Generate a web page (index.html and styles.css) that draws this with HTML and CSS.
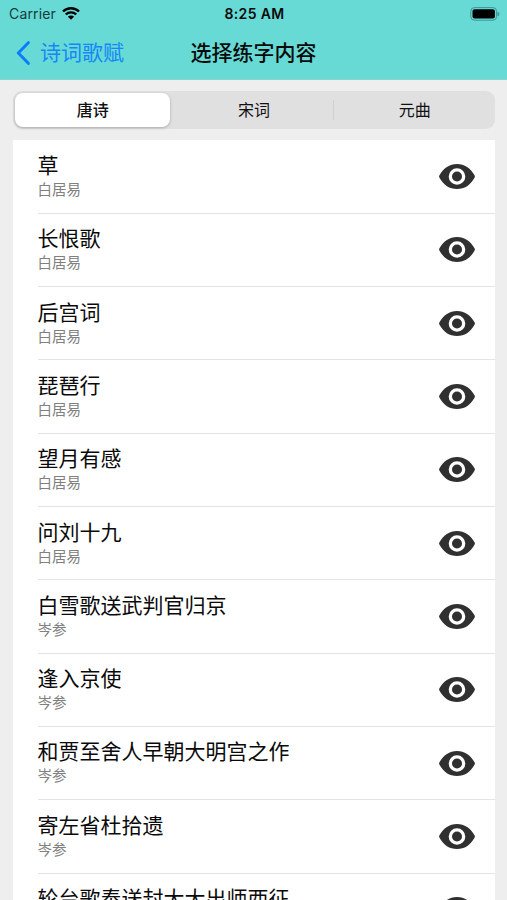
FILE: index.html
```html
<!DOCTYPE html>
<html lang="zh-CN">
  <head>
    <meta charset="UTF-8" />
    <meta name="viewport" content="width=device-width, initial-scale=1.0" />
    <title>选择练字内容</title>
    <link rel="stylesheet" href="styles.css">
  </head>
  <body>
    <header class="topbar">
      <div class="status">
        <div class="carrier">
          <span>Carrier</span>
          <svg class="wifi" viewBox="0 0 18 13">
            <path d="M1 4.5a11.5 11.5 0 0 1 16 0" />
            <path d="M3.8 7.5a7.5 7.5 0 0 1 10.4 0" />
            <path class="dot" d="M9 12.8L5.9 9.7a4.4 4.4 0 0 1 6.2 0z" />
          </svg>
        </div>
        <div class="time">8:25 AM</div>
        <div class="power">
          <svg class="battery" viewBox="0 0 30 14">
            <rect class="shell" x=".8" y=".6" width="25.8" height="12.6" rx="3.6" />
            <rect x="2.5" y="2.3" width="22.4" height="9.2" rx="2" />
            <path class="cap" d="M27.5 4.7c2.6.8 2.6 3.8 0 4.6z" />
          </svg>
        </div>
      </div>
      <nav class="navbar">
        <a class="back" href="#">
          <svg class="chevron" viewBox="0 0 14 24"><path d="M12.3 1.7L2.3 12l10 10.3" /></svg>
          <span>诗词歌赋</span>
        </a>
        <h1>选择练字内容</h1>
      </nav>
    </header>

    <div class="segments">
      <button class="segment active" type="button">唐诗</button>
      <button class="segment" type="button">宋词</button>
      <button class="segment" type="button">元曲</button>
    </div>

    <svg width="0" height="0" class="defs">
      <symbol id="eye" viewBox="0 0 36 25">
        <path fill-rule="evenodd" d="M18 0C25.5 0 31.500 4 35.500 11.300Q36.300 12.500 35.500 13.700C31.500 21 25.500 25 18 25S4.500 21 .5 13.700Q-.3 12.500 .5 11.300C4.500 4 10.500 0 18 0zM18 4.200a8.300 8.300 0 1 0 0 16.600a8.300 8.300 0 1 0 0-16.600z" />
        <circle cx="18" cy="12.5" r="5" />
      </symbol>
    </svg>

    <ul class="poems" id="poems"></ul>

    <script>
const poems = [
  ["草", "白居易"],
  ["长恨歌", "白居易"],
  ["后宫词", "白居易"],
  ["琵琶行", "白居易"],
  ["望月有感", "白居易"],
  ["问刘十九", "白居易"],
  ["白雪歌送武判官归京", "岑参"],
  ["逢入京使", "岑参"],
  ["和贾至舍人早朝大明宫之作", "岑参"],
  ["寄左省杜拾遗", "岑参"],
  ["轮台歌奉送封大大出师西征", "岑参"]
];

let html = "";
poems.forEach(([title, author]) => {
  html += `<li class="poem">
    <div class="info"><div class="title">${title}</div><div class="author">${author}</div></div>
    <svg class="eye"><use href="#eye" /></svg>
  </li>`;
});
document.getElementById("poems").innerHTML = html;
    </script>
  </body>
</html>
```

FILE: styles.css
```css
* {
  box-sizing: border-box;
}

body {
  margin: 0;
  height: 900px;
  overflow: hidden;
  background: #eeeeee;
  color: #0a0a0a;
  font-family: Inter, "Noto Sans CJK SC", sans-serif;
}

.topbar {
  height: 80px;
  background: #67dad6;
  border-bottom: 1px solid #8fd3d0;
}

.status {
  display: grid;
  grid-template-columns: 1fr auto 1fr;
  align-items: center;
  height: 27px;
  padding: 0 7px 0 9px;
  font-size: 14px;
}

.carrier {
  display: flex;
  align-items: center;
  gap: 6px;
  color: #123c3b;
  letter-spacing: 0.15px;
}

.wifi {
  width: 18px;
  height: 13px;
  fill: none;
  stroke: #000;
  stroke-width: 2.4;
}

.wifi .dot {
  fill: #000;
  stroke: none;
}

.time {
  font-weight: 600;
  letter-spacing: 0.35px;
}

.power {
  display: flex;
  justify-content: flex-end;
}

.battery {
  width: 30px;
  height: 14px;
}

.battery .shell {
  fill: none;
  stroke: #3c9592;
}

.battery .cap {
  fill: #3c9592;
}

.navbar {
  display: grid;
  grid-template-columns: 1fr auto 1fr;
  align-items: center;
  height: 51px;
  padding: 0 16px;
}

.back {
  display: flex;
  align-items: center;
  gap: 10px;
  color: #1687f5;
  font-size: 21px;
  line-height: 30px;
  text-decoration: none;
}

.chevron {
  width: 14px;
  height: 24px;
  fill: none;
  stroke: #0b7dfa;
  stroke-width: 3;
  stroke-linecap: round;
  stroke-linejoin: round;
}

.navbar h1 {
  margin: 0;
  font-size: 21px;
  font-weight: 500;
  line-height: 30px;
}

.segments {
  display: grid;
  grid-template-columns: repeat(3, 1fr);
  height: 38px;
  margin: 11px 12px 0 13px;
  padding: 2px;
  border-radius: 9px;
  background: #e0e0e1;
}

.segment {
  position: relative;
  margin: 0;
  padding: 0;
  border: none;
  background: none;
  color: #111;
  font: 400 16px/34px Inter, "Noto Sans CJK SC", sans-serif;
}

.segment.active {
  margin-right: 4px;
  border-radius: 8px;
  background: #fff;
  box-shadow: 0 1px 3px rgba(0, 0, 0, 0.25);
  font-weight: 500;
}

.segment:last-child {
  padding-left: 3px;
}

.segment:nth-child(2)::after {
  content: "";
  position: absolute;
  top: 7px;
  right: 0;
  width: 1px;
  height: 20px;
  background: #cfcfd1;
}

.defs {
  display: block;
}

.poems {
  margin: 11px 12px 0 13px;
  padding: 0.4px 0 0;
  list-style: none;
  background: #fff;
}

.poem {
  display: flex;
  align-items: center;
  justify-content: space-between;
  height: 73.33px;
  margin-left: 24.5px;
  padding-right: 20px;
  border-bottom: 1px solid #e4e4e4;
}

.info {
  padding-bottom: 2.4px;
}

.title {
  font-size: 21px;
  line-height: 29px;
}

.author {
  color: #808080;
  font-size: 14.5px;
  line-height: 20px;
}

.eye {
  width: 36px;
  height: 25px;
  fill: #303030;
}
```
